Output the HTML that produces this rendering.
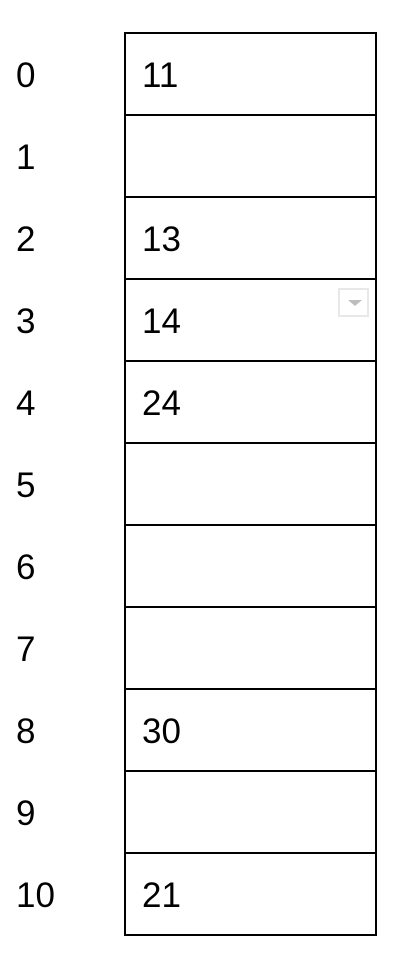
<!DOCTYPE html>
<html><head><style>
body{margin:0;width:400px;height:956px;background:#fff;position:relative;font-family:"Liberation Sans",Arial,sans-serif;color:#000;overflow:hidden}
.box{position:absolute;left:124px;top:32px;width:249px;height:900px;border:2px solid #000}
.ln{position:absolute;left:124px;width:253px;height:2px;background:#000}
.t{position:absolute;font-size:35px;line-height:36px}
.dd{position:absolute;left:338px;top:288px;width:31px;height:29px;border:2px solid #e8e8e8;box-sizing:border-box;background:#fff}
.dd:after{content:"";position:absolute;left:8px;top:10px;border-left:7px solid transparent;border-right:7px solid transparent;border-top:6px solid #bdbdbd}
</style></head><body>
<div class="box"></div>
<div class="ln" style="top:114px"></div>
<div class="ln" style="top:196px"></div>
<div class="ln" style="top:278px"></div>
<div class="ln" style="top:360px"></div>
<div class="ln" style="top:442px"></div>
<div class="ln" style="top:524px"></div>
<div class="ln" style="top:606px"></div>
<div class="ln" style="top:688px"></div>
<div class="ln" style="top:770px"></div>
<div class="ln" style="top:852px"></div>
<div class="t" style="left:16px;top:58px">0</div><div class="t" style="left:142px;top:58px">11</div>
<div class="t" style="left:16px;top:140px">1</div>
<div class="t" style="left:16px;top:222px">2</div><div class="t" style="left:142px;top:222px">13</div>
<div class="t" style="left:16px;top:304px">3</div><div class="t" style="left:142px;top:304px">14</div>
<div class="t" style="left:16px;top:386px">4</div><div class="t" style="left:142px;top:386px">24</div>
<div class="t" style="left:16px;top:468px">5</div>
<div class="t" style="left:16px;top:550px">6</div>
<div class="t" style="left:16px;top:632px">7</div>
<div class="t" style="left:16px;top:714px">8</div><div class="t" style="left:142px;top:714px">30</div>
<div class="t" style="left:16px;top:796px">9</div>
<div class="t" style="left:16px;top:878px">10</div><div class="t" style="left:142px;top:878px">21</div>
<div class="dd"></div>
</body></html>
